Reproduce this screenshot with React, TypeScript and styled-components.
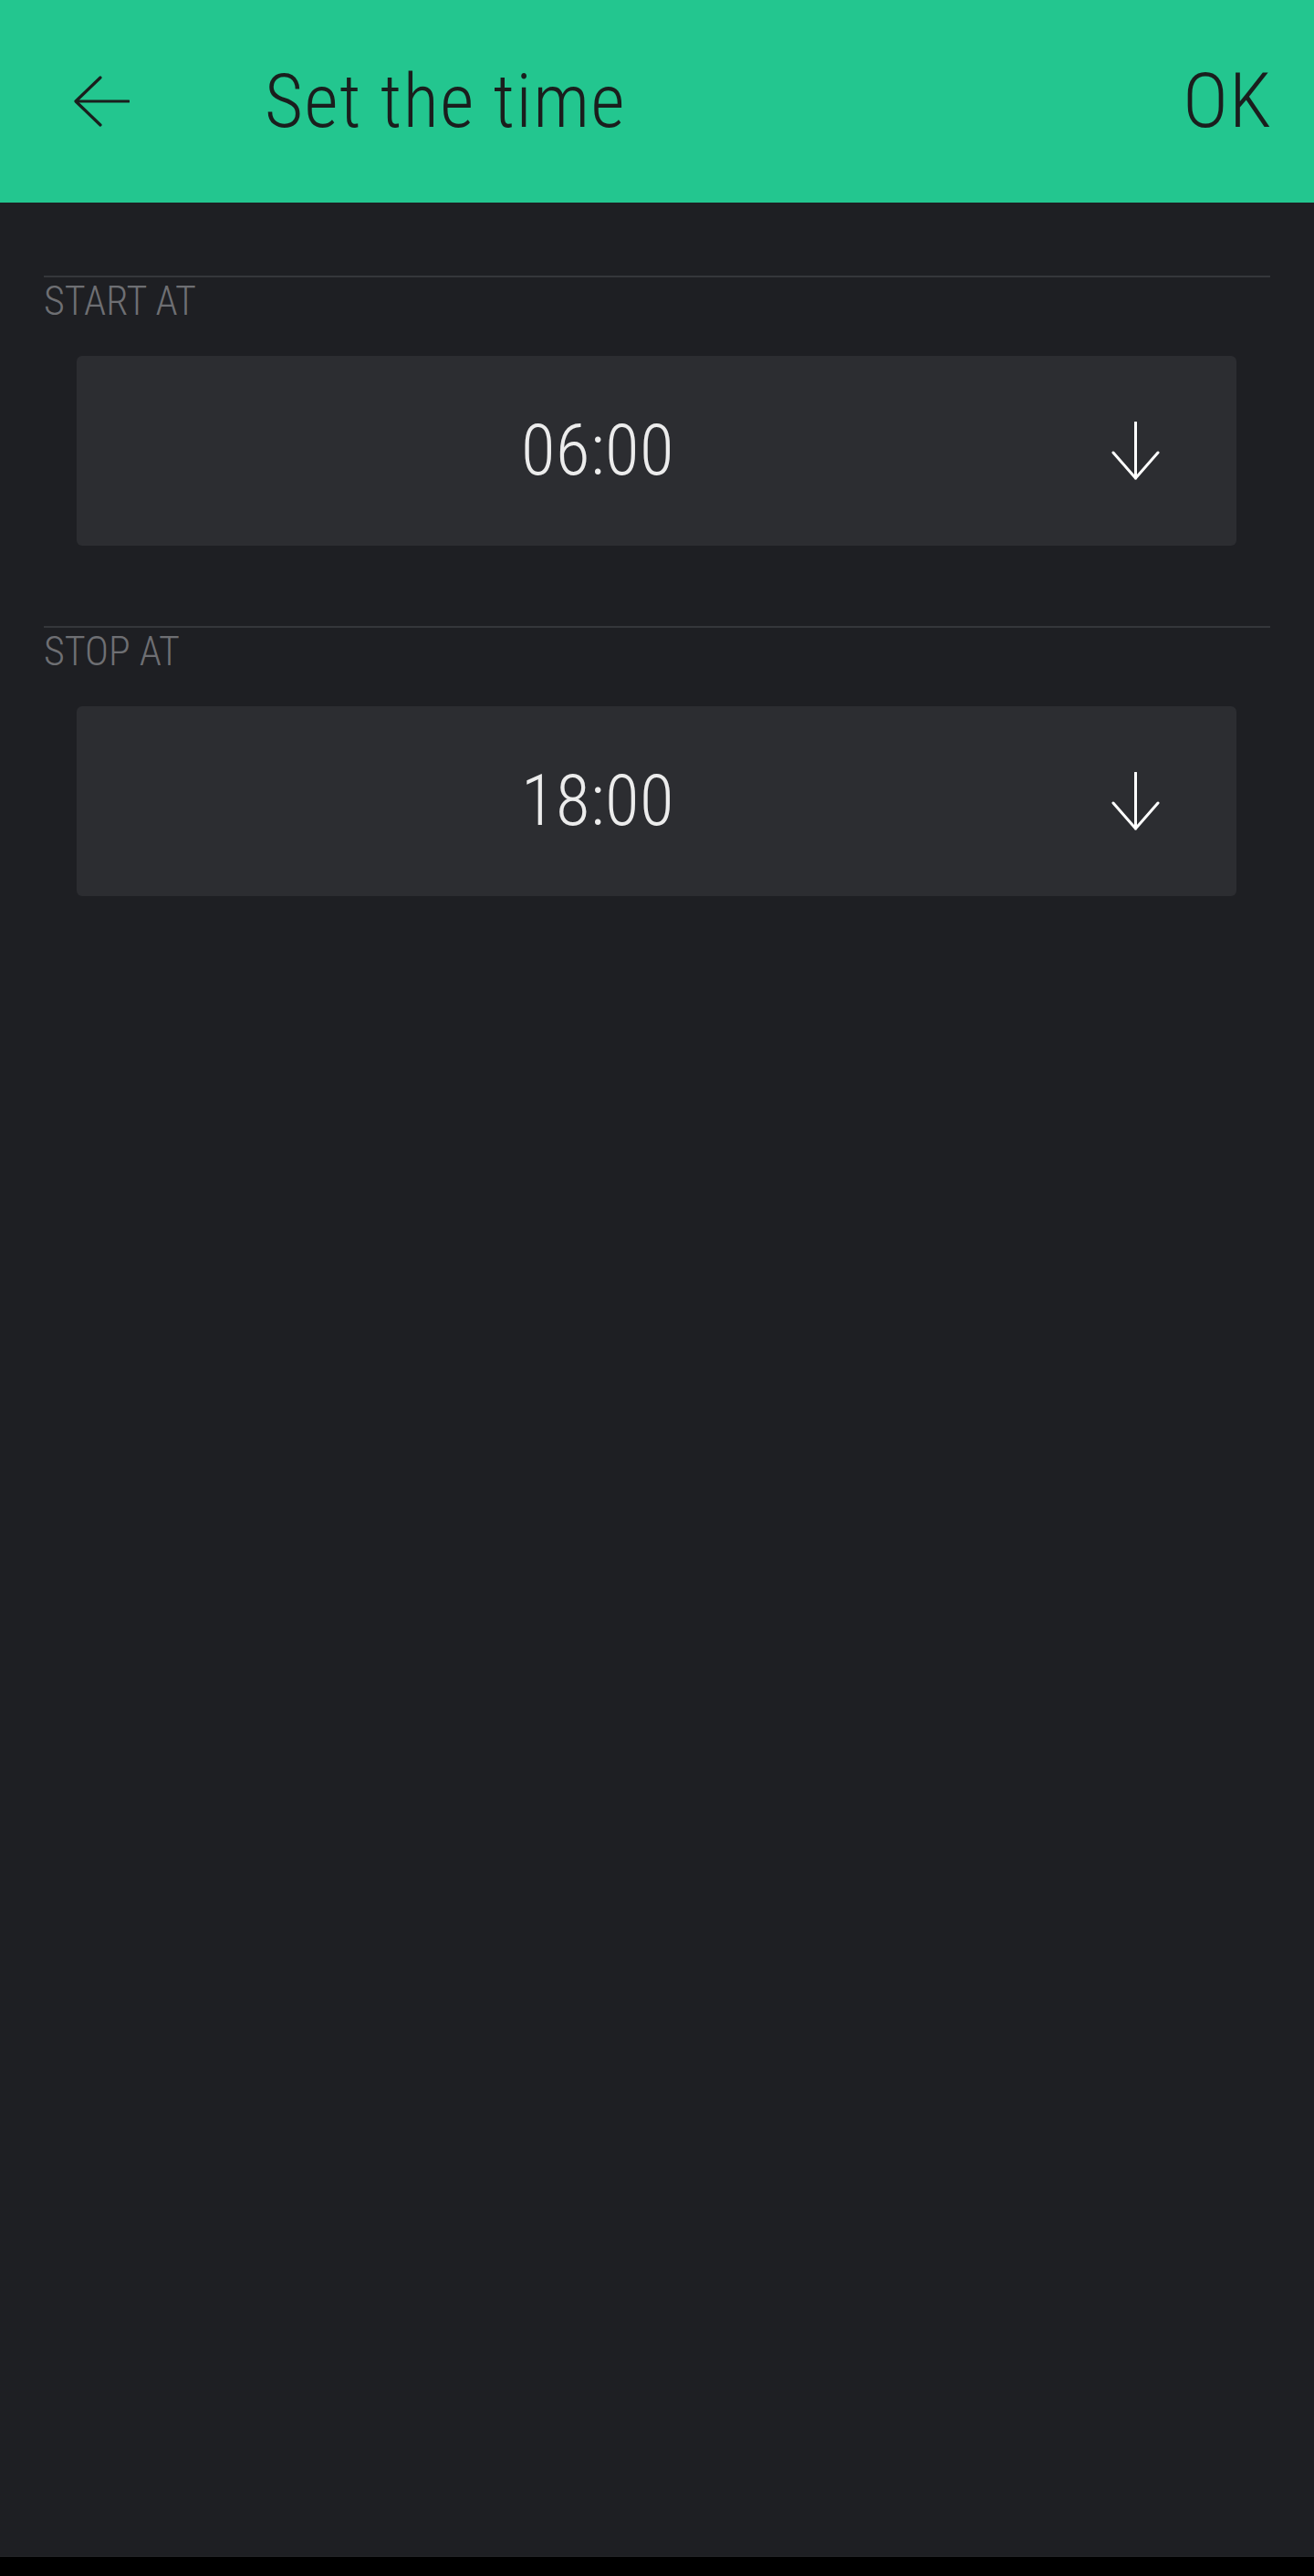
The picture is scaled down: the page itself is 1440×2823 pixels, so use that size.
import React from "react";
import styled, { createGlobalStyle } from "styled-components";

const Global = createGlobalStyle`
  html, body { margin: 0; padding: 0; background: #1e1f23; }
  body {
    font-family: "Roboto Condensed", Roboto, "Liberation Sans", sans-serif;
    font-stretch: condensed;
    font-weight: 300;
  }
`;

const Page = styled.div`
  width: 1440px;
  height: 2823px;
  display: flex;
  flex-direction: column;
  background: #1e1f23;
`;

const Header = styled.header`
  height: 222px;
  flex: none;
  background: #23c68f;
  display: flex;
  align-items: center;
  padding: 0 46px 0 81px;
  box-sizing: border-box;
  color: #1a1e1d;
`;

const BackIcon = styled.svg`
  width: 61px;
  height: 56px;
  flex: none;
`;

const Title = styled.h1`
  margin: 0 0 0 148px;
  flex: 1;
  font-size: 81px;
  font-weight: 300;
  letter-spacing: 1.5px;
  line-height: 1;
  color: #1a1e1d;
`;

const Ok = styled.span`
  font-size: 84px;
  font-weight: 300;
  letter-spacing: 1px;
  line-height: 1;
  color: #1a1e1d;
`;

const Content = styled.main`
  flex: 1;
  padding: 80px 48px 0;
  display: flex;
  flex-direction: column;
  gap: 88px;
`;

const Section = styled.section`
  display: flex;
  flex-direction: column;
`;

const Divider = styled.div`
  height: 2px;
  background: #35373b;
`;

const Label = styled.div`
  margin-top: 4px;
  font-size: 44px;
  line-height: 44px;
  color: #6e6f73;
`;

const Card = styled.div`
  margin: 38px 37px 0 36px;
  height: 208px;
  background: #2c2d31;
  border-radius: 6px;
  display: flex;
  align-items: center;
  padding-right: 84px;
`;

const Value = styled.div`
  flex: 1;
  text-align: center;
  font-size: 77px;
  font-weight: 300;
  letter-spacing: 0.5px;
  line-height: 1;
  color: #ececec;
  margin-right: -8px;
`;

const DownIcon = styled.svg`
  width: 53px;
  height: 64px;
  flex: none;
`;

const BottomBar = styled.div`
  height: 21px;
  flex: none;
  background: #000;
  border-top: 1px solid #26272b;
`;

const Back = () => (
  <BackIcon viewBox="0 0 61 56" fill="none" stroke="#1a1e1d" strokeWidth="3.2" strokeLinecap="round" strokeLinejoin="round">
    <path d="M60 28 H3" />
    <path d="M29 2 L2 28 L29 54" />
  </BackIcon>
);

const Down = () => (
  <DownIcon viewBox="0 0 53 64" fill="none" stroke="#ffffff" strokeWidth="3" strokeLinecap="round" strokeLinejoin="round">
    <path d="M26.5 1 V62" />
    <path d="M2 34 L26.5 62 L51 34" />
  </DownIcon>
);

const TimeField = ({ label, value }: { label: string; value: string }) => (
  <Section>
    <Divider />
    <Label>{label}</Label>
    <Card>
      <Value>{value}</Value>
      <Down />
    </Card>
  </Section>
);

export default function App() {
  return (
    <>
      <Global />
      <Page>
        <Header>
          <Back />
          <Title>Set the time</Title>
          <Ok>OK</Ok>
        </Header>
        <Content>
          <TimeField label="START AT" value="06:00" />
          <TimeField label="STOP AT" value="18:00" />
        </Content>
        <BottomBar />
      </Page>
    </>
  );
}
